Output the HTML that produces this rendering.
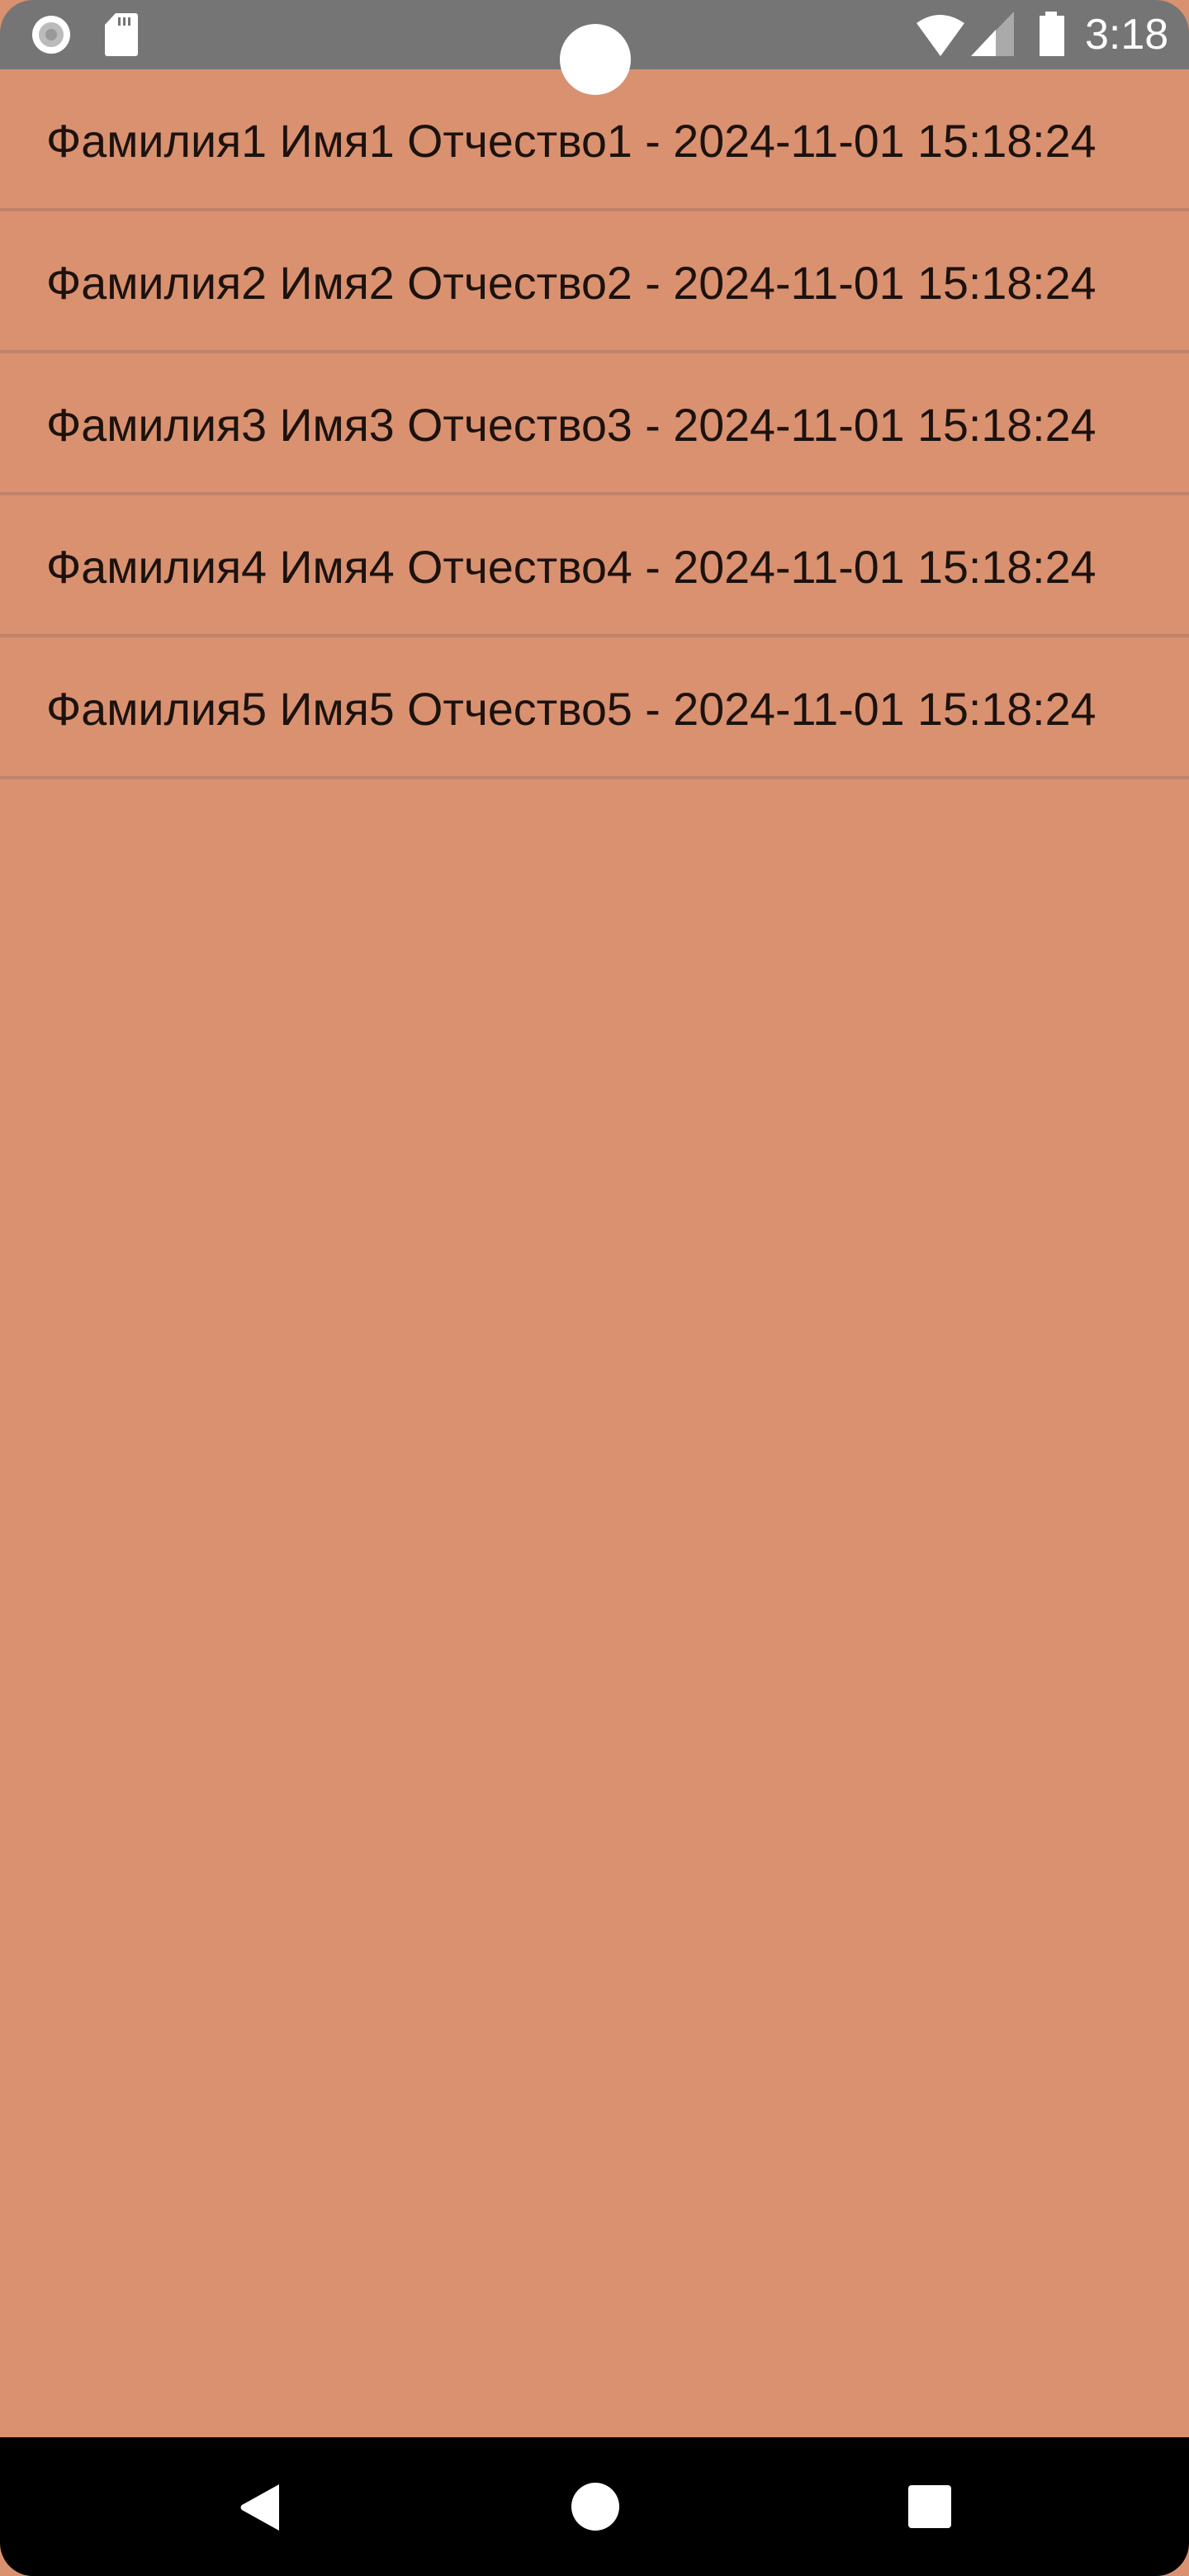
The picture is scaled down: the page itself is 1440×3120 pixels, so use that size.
<!DOCTYPE html>
<html><head><meta charset="utf-8"><style>
html,body{margin:0;padding:0;}
body{width:1440px;height:3120px;background:#fff;position:relative;overflow:hidden;font-family:"Liberation Sans",sans-serif;}
.app{position:absolute;left:0;top:0;width:1440px;height:3120px;background:#d99170;}
.status{position:absolute;left:0;top:0;width:1440px;height:84px;background:#757575;border-radius:40px 40px 0 0;}
.cut{position:absolute;left:678px;top:29px;width:86px;height:86px;border-radius:50%;background:#fff;}
.row{position:absolute;left:0;width:1440px;height:168px;border-bottom:4px solid #c0826a;}
.row span{position:absolute;left:56px;top:59px;font-size:56px;line-height:56px;color:#1c120e;white-space:nowrap;transform:scaleX(0.993);transform-origin:left center;}
.nav{position:absolute;left:0;top:2952px;width:1440px;height:168px;background:#000;border-radius:0 0 40px 40px;}
.time{position:absolute;left:1314px;top:14px;font-size:52px;line-height:56px;color:#fff;}
</style></head><body>
<div class="app">
<div class="status">
<svg style="position:absolute;left:36px;top:16px" width="56" height="52" viewBox="0 0 56 52"><circle cx="26" cy="26" r="23" fill="#fff"/><circle cx="26" cy="26" r="15" fill="#bbb"/><circle cx="26" cy="26" r="7" fill="#999"/></svg>
<svg style="position:absolute;left:126px;top:16px" width="42" height="52" viewBox="0 0 42 52"><path d="M14 0H38a3 3 0 0 1 3 3V49a3 3 0 0 1-3 3H4a3 3 0 0 1-3-3V14Z" fill="#fff"/><rect x="17" y="5" width="3" height="10" fill="#757575"/><rect x="23" y="5" width="3" height="10" fill="#757575"/><rect x="29" y="5" width="3" height="10" fill="#757575"/></svg>
<svg style="position:absolute;left:1108px;top:16px" width="64" height="52" viewBox="0 0 64 52"><path d="M2 12Q30 -8 60 12L31 52Z" fill="#fff"/></svg>
<svg style="position:absolute;left:1176px;top:14px" width="54" height="54" viewBox="0 0 54 54"><path d="M52 0V54H0Z" fill="#aaa"/><path d="M30 22V54H0L30 22Z" fill="#fff"/></svg>
<svg style="position:absolute;left:1256px;top:14px" width="36" height="54" viewBox="0 0 36 54"><rect x="10" y="0" width="14" height="6" fill="#fff"/><rect x="3" y="5" width="30" height="49" fill="#fff"/></svg>
<div class="time">3:18</div>
</div>
<div class="row" style="top:84px"><span>Фамилия1 Имя1 Отчество1 - 2024-11-01 15:18:24</span></div>
<div class="row" style="top:256px"><span>Фамилия2 Имя2 Отчество2 - 2024-11-01 15:18:24</span></div>
<div class="row" style="top:428px"><span>Фамилия3 Имя3 Отчество3 - 2024-11-01 15:18:24</span></div>
<div class="row" style="top:600px"><span>Фамилия4 Имя4 Отчество4 - 2024-11-01 15:18:24</span></div>
<div class="row" style="top:772px"><span>Фамилия5 Имя5 Отчество5 - 2024-11-01 15:18:24</span></div>
<div class="cut"></div>
<div class="nav">
<svg style="position:absolute;left:290px;top:56px" width="52" height="58" viewBox="0 0 52 58"><path d="M48 1V57L3 32Q0 29 3 26Z" fill="#fff"/></svg>
<div style="position:absolute;left:692px;top:55px;width:58px;height:58px;border-radius:50%;background:#fff"></div>
<div style="position:absolute;left:1100px;top:58px;width:52px;height:52px;border-radius:4px;background:#fff"></div>
</div>
</div>
</body></html>
